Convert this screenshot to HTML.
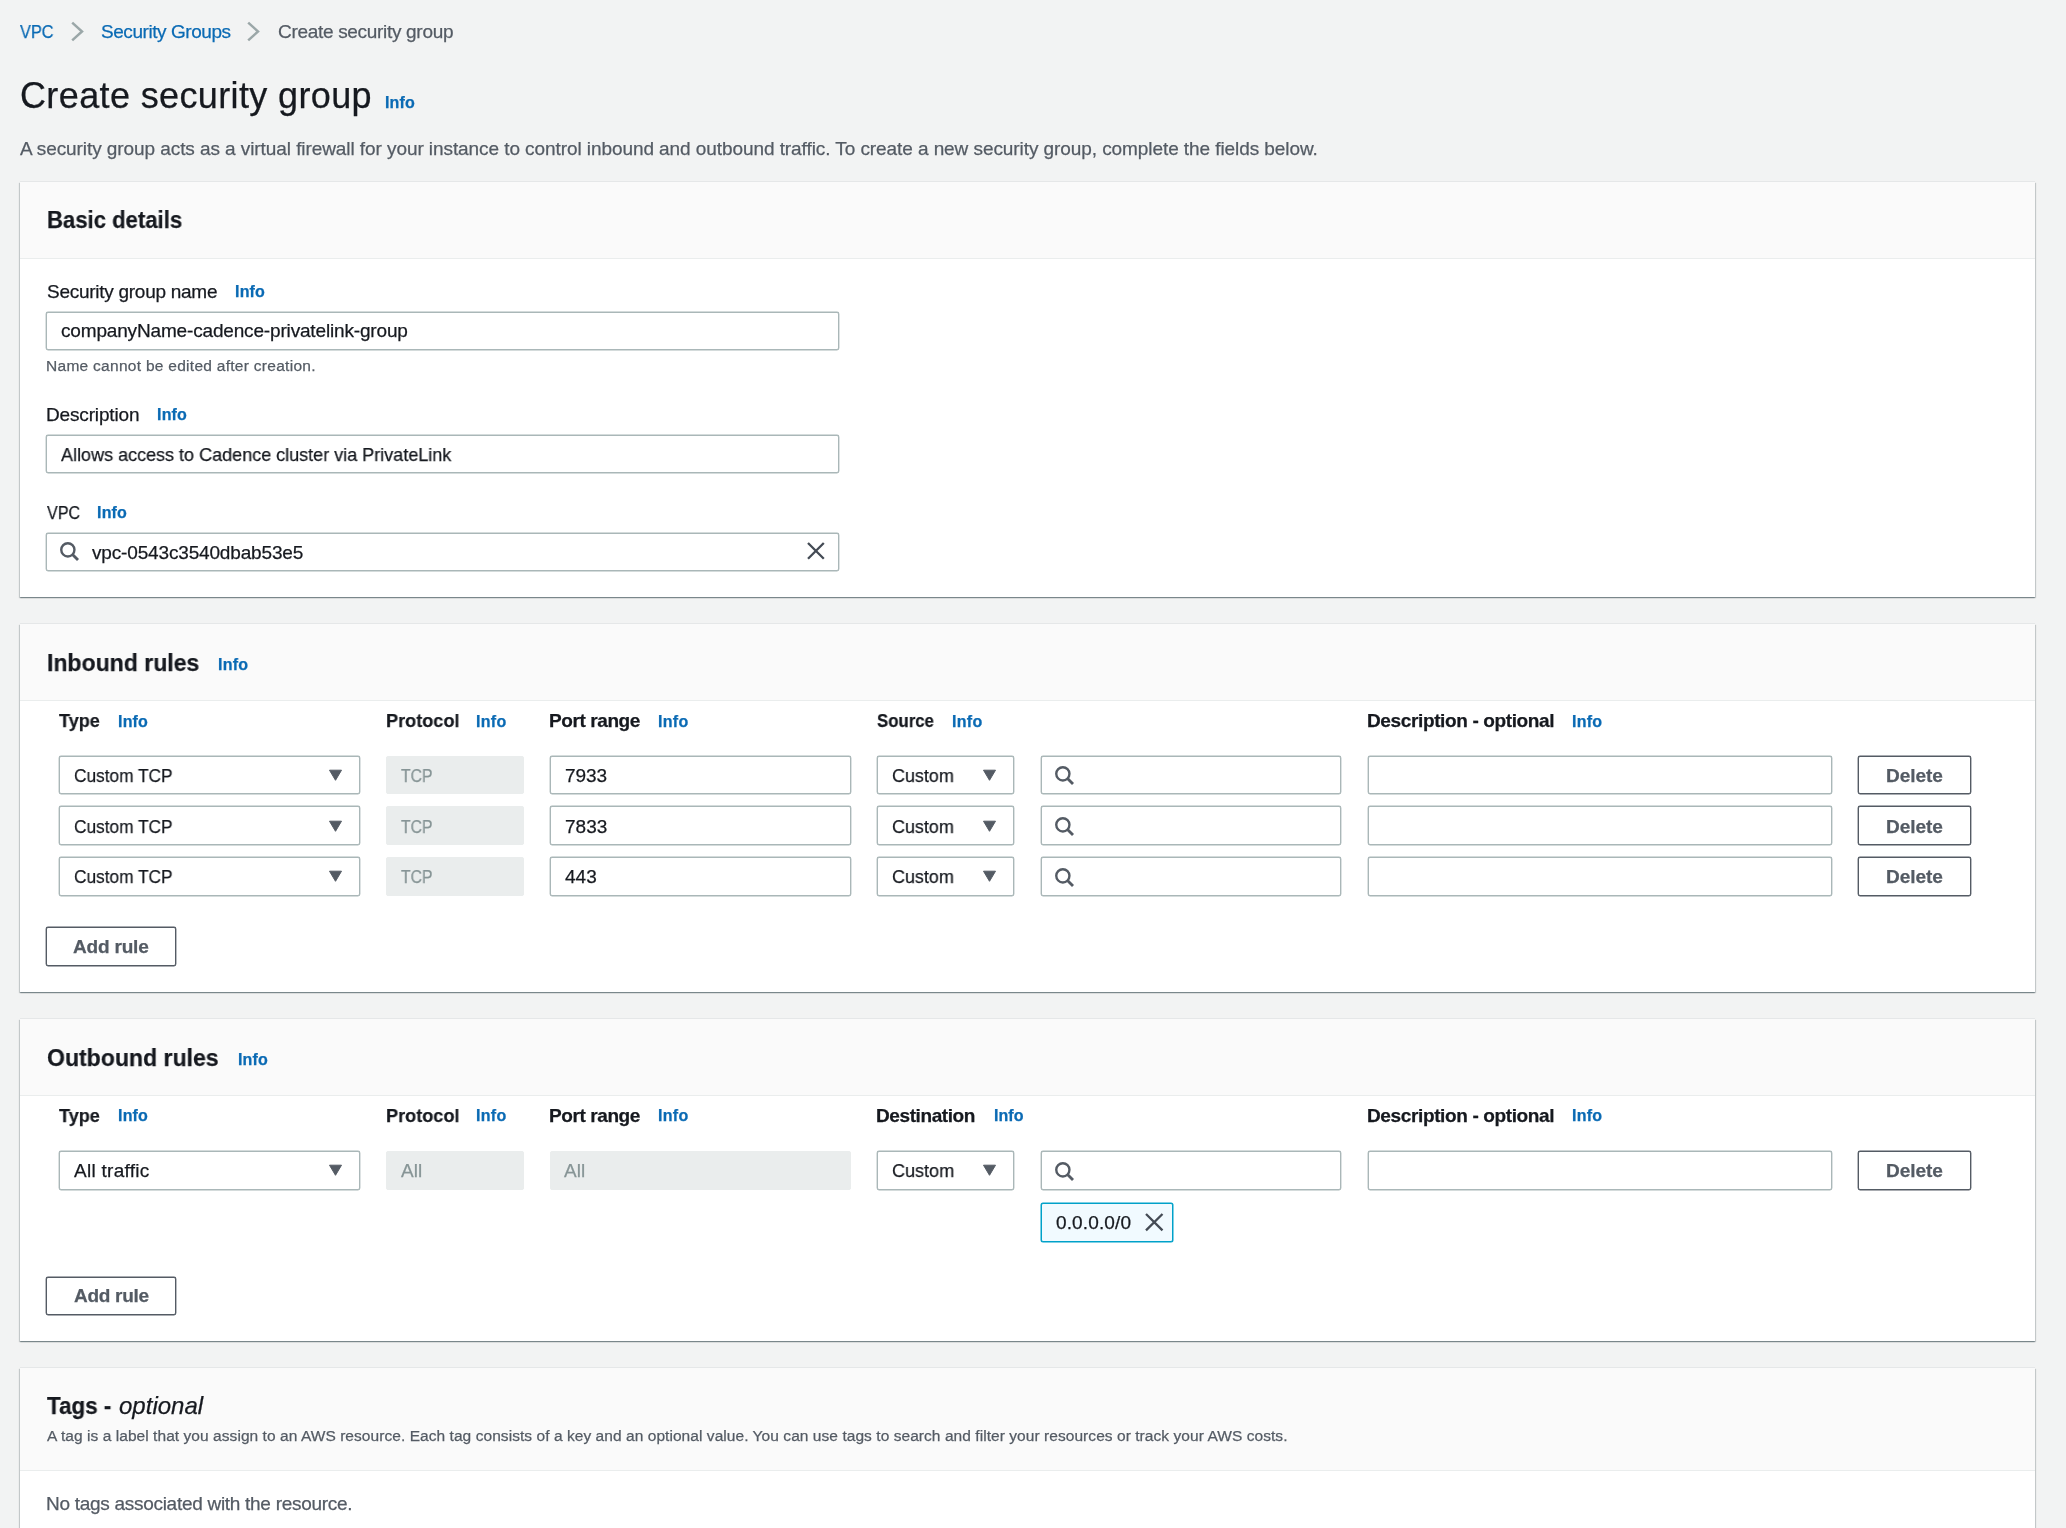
<!DOCTYPE html>
<html><head><meta charset="utf-8"><style>
html,body{margin:0;padding:0;}
body{width:2066px;height:1528px;overflow:hidden;position:relative;background:#f2f3f3;font-family:"Liberation Sans",sans-serif;color:#16191f;}
.t{position:absolute;white-space:pre;will-change:transform;-webkit-text-stroke:0.25px currentColor;}
.panel{position:absolute;left:20px;width:2015px;background:#fff;box-shadow:0 1px 1px 0 rgba(0,28,36,.3),1px 1px 1px 0 rgba(0,28,36,.15),-1px 1px 1px 0 rgba(0,28,36,.15),0 -1px 0 0 rgba(0,28,36,.05);}
.ph{background:#fafafa;border-bottom:1px solid #eaeded;box-sizing:border-box;}
.inp{position:absolute;box-sizing:border-box;border:1px solid #aab7b8;border-radius:2px;background:#fff;box-shadow:0 0 0 0.4px #aab7b8;}
.dis{position:absolute;box-sizing:border-box;border:1px solid #eaeded;border-radius:2px;background:#eaeded;}
.btn{position:absolute;box-sizing:border-box;border:1px solid #545b64;border-radius:2px;background:#fff;box-shadow:0 0 0 0.4px #545b64;}
.tok{position:absolute;box-sizing:border-box;border:1px solid #00a1c9;border-radius:2px;background:#f1faff;box-shadow:0 0 0 0.5px #00a1c9;}
.ic{position:absolute;overflow:visible;}
</style></head><body>
<div class="panel" style="top:182px;height:415px"><div class="ph" style="height:77px"></div></div>
<div class="panel" style="top:624px;height:368px"><div class="ph" style="height:77px"></div></div>
<div class="panel" style="top:1019px;height:322px"><div class="ph" style="height:77px"></div></div>
<div class="panel" style="top:1368px;height:232px"><div class="ph" style="height:102.5px"></div></div>
<div class="inp" style="left:46px;top:311.5px;width:793px;height:38.5px;"></div>
<div class="inp" style="left:46px;top:435px;width:793px;height:38px;"></div>
<div class="inp" style="left:46px;top:533px;width:793px;height:38px;"></div>
<div class="inp" style="left:59px;top:755.5px;width:301px;height:38.700000000000045px;"></div>
<div class="dis" style="left:386px;top:755.5px;width:138px;height:38.700000000000045px;"></div>
<div class="inp" style="left:550px;top:755.5px;width:301px;height:38.700000000000045px;"></div>
<div class="inp" style="left:877px;top:755.5px;width:137px;height:38.700000000000045px;"></div>
<div class="inp" style="left:1041px;top:755.5px;width:300px;height:38.700000000000045px;"></div>
<div class="inp" style="left:1368px;top:755.5px;width:464px;height:38.700000000000045px;"></div>
<div class="btn" style="left:1858px;top:755.5px;width:113px;height:38.700000000000045px;"></div>
<div class="inp" style="left:59px;top:806.2px;width:301px;height:38.700000000000045px;"></div>
<div class="dis" style="left:386px;top:806.2px;width:138px;height:38.700000000000045px;"></div>
<div class="inp" style="left:550px;top:806.2px;width:301px;height:38.700000000000045px;"></div>
<div class="inp" style="left:877px;top:806.2px;width:137px;height:38.700000000000045px;"></div>
<div class="inp" style="left:1041px;top:806.2px;width:300px;height:38.700000000000045px;"></div>
<div class="inp" style="left:1368px;top:806.2px;width:464px;height:38.700000000000045px;"></div>
<div class="btn" style="left:1858px;top:806.2px;width:113px;height:38.700000000000045px;"></div>
<div class="inp" style="left:59px;top:856.9px;width:301px;height:38.700000000000045px;"></div>
<div class="dis" style="left:386px;top:856.9px;width:138px;height:38.700000000000045px;"></div>
<div class="inp" style="left:550px;top:856.9px;width:301px;height:38.700000000000045px;"></div>
<div class="inp" style="left:877px;top:856.9px;width:137px;height:38.700000000000045px;"></div>
<div class="inp" style="left:1041px;top:856.9px;width:300px;height:38.700000000000045px;"></div>
<div class="inp" style="left:1368px;top:856.9px;width:464px;height:38.700000000000045px;"></div>
<div class="btn" style="left:1858px;top:856.9px;width:113px;height:38.700000000000045px;"></div>
<div class="btn" style="left:46px;top:927px;width:130px;height:39px;"></div>
<div class="inp" style="left:59px;top:1151px;width:301px;height:38.700000000000045px;"></div>
<div class="dis" style="left:386px;top:1151px;width:138px;height:38.700000000000045px;"></div>
<div class="dis" style="left:550px;top:1151px;width:301px;height:38.700000000000045px;"></div>
<div class="inp" style="left:877px;top:1151px;width:137px;height:38.700000000000045px;"></div>
<div class="inp" style="left:1041px;top:1151px;width:300px;height:38.700000000000045px;"></div>
<div class="inp" style="left:1368px;top:1151px;width:464px;height:38.700000000000045px;"></div>
<div class="btn" style="left:1858px;top:1151px;width:113px;height:38.700000000000045px;"></div>
<div class="tok" style="left:1040.5px;top:1202.7px;width:132.5px;height:39.09999999999991px;"></div>
<div class="btn" style="left:46px;top:1276.5px;width:130px;height:38.0px;"></div>
<svg class="ic" style="left:70px;top:20px" width="16" height="23" viewBox="0 0 16 23"><path d="M2.2 2.6 L12 11.5 L2.2 20.4" fill="none" stroke="#9ba7a8" stroke-width="2.5"/></svg>
<svg class="ic" style="left:246.3px;top:20px" width="16" height="23" viewBox="0 0 16 23"><path d="M2.2 2.6 L12 11.5 L2.2 20.4" fill="none" stroke="#9ba7a8" stroke-width="2.5"/></svg>
<svg class="ic" style="left:59.1px;top:541.1px" width="22" height="22" viewBox="0 0 22 22"><circle cx="8.85" cy="8.85" r="6.6" fill="none" stroke="#545b64" stroke-width="2.4"/><path d="M13.5 13.5 L19.0 19.0" stroke="#545b64" stroke-width="2.8"/></svg>
<svg class="ic" style="left:805.6px;top:540.8px" width="19.799999999999955" height="19.800000000000068" viewBox="0 0 19.799999999999955 19.800000000000068"><path d="M2 2 L17.799999999999955 17.800000000000068 M17.799999999999955 2 L2 17.800000000000068" stroke="#444b55" stroke-width="2.3"/></svg>
<svg class="ic" style="left:328.0px;top:768.9px" width="15" height="13" viewBox="0 0 15 13"><path d="M1.5 1.2 H13.5 L7.5 11.3 Z" fill="#545b64" stroke="#545b64" stroke-width="1" stroke-linejoin="round"/></svg>
<svg class="ic" style="left:982.3px;top:768.9px" width="15" height="13" viewBox="0 0 15 13"><path d="M1.5 1.2 H13.5 L7.5 11.3 Z" fill="#545b64" stroke="#545b64" stroke-width="1" stroke-linejoin="round"/></svg>
<svg class="ic" style="left:1053.7px;top:765.2px" width="22" height="22" viewBox="0 0 22 22"><circle cx="8.85" cy="8.85" r="6.6" fill="none" stroke="#545b64" stroke-width="2.4"/><path d="M13.5 13.5 L19.0 19.0" stroke="#545b64" stroke-width="2.8"/></svg>
<svg class="ic" style="left:328.0px;top:819.6px" width="15" height="13" viewBox="0 0 15 13"><path d="M1.5 1.2 H13.5 L7.5 11.3 Z" fill="#545b64" stroke="#545b64" stroke-width="1" stroke-linejoin="round"/></svg>
<svg class="ic" style="left:982.3px;top:819.6px" width="15" height="13" viewBox="0 0 15 13"><path d="M1.5 1.2 H13.5 L7.5 11.3 Z" fill="#545b64" stroke="#545b64" stroke-width="1" stroke-linejoin="round"/></svg>
<svg class="ic" style="left:1053.7px;top:815.9000000000001px" width="22" height="22" viewBox="0 0 22 22"><circle cx="8.85" cy="8.85" r="6.6" fill="none" stroke="#545b64" stroke-width="2.4"/><path d="M13.5 13.5 L19.0 19.0" stroke="#545b64" stroke-width="2.8"/></svg>
<svg class="ic" style="left:328.0px;top:870.3px" width="15" height="13" viewBox="0 0 15 13"><path d="M1.5 1.2 H13.5 L7.5 11.3 Z" fill="#545b64" stroke="#545b64" stroke-width="1" stroke-linejoin="round"/></svg>
<svg class="ic" style="left:982.3px;top:870.3px" width="15" height="13" viewBox="0 0 15 13"><path d="M1.5 1.2 H13.5 L7.5 11.3 Z" fill="#545b64" stroke="#545b64" stroke-width="1" stroke-linejoin="round"/></svg>
<svg class="ic" style="left:1053.7px;top:866.6px" width="22" height="22" viewBox="0 0 22 22"><circle cx="8.85" cy="8.85" r="6.6" fill="none" stroke="#545b64" stroke-width="2.4"/><path d="M13.5 13.5 L19.0 19.0" stroke="#545b64" stroke-width="2.8"/></svg>
<svg class="ic" style="left:328.0px;top:1164.4px" width="15" height="13" viewBox="0 0 15 13"><path d="M1.5 1.2 H13.5 L7.5 11.3 Z" fill="#545b64" stroke="#545b64" stroke-width="1" stroke-linejoin="round"/></svg>
<svg class="ic" style="left:982.3px;top:1164.4px" width="15" height="13" viewBox="0 0 15 13"><path d="M1.5 1.2 H13.5 L7.5 11.3 Z" fill="#545b64" stroke="#545b64" stroke-width="1" stroke-linejoin="round"/></svg>
<svg class="ic" style="left:1053.7px;top:1160.7px" width="22" height="22" viewBox="0 0 22 22"><circle cx="8.85" cy="8.85" r="6.6" fill="none" stroke="#545b64" stroke-width="2.4"/><path d="M13.5 13.5 L19.0 19.0" stroke="#545b64" stroke-width="2.8"/></svg>
<svg class="ic" style="left:1143.5px;top:1212.4px" width="20.5" height="20.399999999999864" viewBox="0 0 20.5 20.399999999999864"><path d="M2 2 L18.5 18.399999999999864 M18.5 2 L2 18.399999999999864" stroke="#444b55" stroke-width="2.3"/></svg>
<div class="t" style="left:20.30px;top:21.92px;font-size:19px;line-height:19px;color:#0a6ab4;transform:scaleX(0.8580);transform-origin:0 0;">VPC</div>
<div class="t" style="left:101.00px;top:21.92px;font-size:19px;line-height:19px;color:#0a6ab4;letter-spacing:-0.444px;">Security Groups</div>
<div class="t" style="left:278.40px;top:21.92px;font-size:19px;line-height:19px;color:#545b64;letter-spacing:-0.309px;">Create security group</div>
<div class="t" style="left:20.20px;top:78.13px;font-size:36px;line-height:36px;letter-spacing:0.373px;">Create security group</div>
<div class="t" style="left:385.00px;top:95.06px;font-size:16px;line-height:16px;font-weight:bold;color:#0a6ab4;letter-spacing:0.151px;">Info</div>
<div class="t" style="left:20.20px;top:138.92px;font-size:19px;line-height:19px;color:#545b64;letter-spacing:-0.076px;">A security group acts as a virtual firewall for your instance to control inbound and outbound traffic. To create a new security group, complete the fields below.</div>
<div class="t" style="left:46.68px;top:208.08px;font-size:24px;line-height:24px;font-weight:bold;transform:scaleX(0.9209);transform-origin:0 0;">Basic details</div>
<div class="t" style="left:46.70px;top:281.82px;font-size:19px;line-height:19px;letter-spacing:-0.269px;">Security group name</div>
<div class="t" style="left:234.90px;top:284.36px;font-size:16px;line-height:16px;font-weight:bold;color:#0a6ab4;letter-spacing:0.184px;">Info</div>
<div class="t" style="left:61.00px;top:321.42px;font-size:19px;line-height:19px;letter-spacing:-0.163px;">companyName-cadence-privatelink-group</div>
<div class="t" style="left:45.70px;top:358.48px;font-size:15.5px;line-height:15.5px;color:#545b64;letter-spacing:0.282px;">Name cannot be edited after creation.</div>
<div class="t" style="left:45.80px;top:404.92px;font-size:19px;line-height:19px;letter-spacing:-0.157px;">Description</div>
<div class="t" style="left:156.90px;top:407.46px;font-size:16px;line-height:16px;font-weight:bold;color:#0a6ab4;letter-spacing:0.184px;">Info</div>
<div class="t" style="left:61.00px;top:444.62px;font-size:19px;line-height:19px;transform:scaleX(0.9477);transform-origin:0 0;">Allows access to Cadence cluster via PrivateLink</div>
<div class="t" style="left:46.80px;top:502.92px;font-size:19px;line-height:19px;transform:scaleX(0.8476);transform-origin:0 0;">VPC</div>
<div class="t" style="left:97.30px;top:505.46px;font-size:16px;line-height:16px;font-weight:bold;color:#0a6ab4;letter-spacing:0.184px;">Info</div>
<div class="t" style="left:92.20px;top:542.52px;font-size:19px;line-height:19px;letter-spacing:-0.160px;">vpc-0543c3540dbab53e5</div>
<div class="t" style="left:46.54px;top:650.58px;font-size:24px;line-height:24px;font-weight:bold;transform:scaleX(0.9599);transform-origin:0 0;">Inbound rules</div>
<div class="t" style="left:217.70px;top:656.76px;font-size:16px;line-height:16px;font-weight:bold;color:#0a6ab4;letter-spacing:0.218px;">Info</div>
<div class="t" style="left:59.30px;top:711.12px;font-size:19px;line-height:19px;font-weight:bold;transform:scaleX(0.9512);transform-origin:0 0;">Type</div>
<div class="t" style="left:117.90px;top:713.66px;font-size:16px;line-height:16px;font-weight:bold;color:#0a6ab4;letter-spacing:0.184px;">Info</div>
<div class="t" style="left:386.05px;top:711.12px;font-size:19px;line-height:19px;font-weight:bold;transform:scaleX(0.9535);transform-origin:0 0;">Protocol</div>
<div class="t" style="left:475.90px;top:713.66px;font-size:16px;line-height:16px;font-weight:bold;color:#0a6ab4;letter-spacing:0.284px;">Info</div>
<div class="t" style="left:549.30px;top:711.12px;font-size:19px;line-height:19px;font-weight:bold;letter-spacing:-0.406px;">Port range</div>
<div class="t" style="left:657.70px;top:713.66px;font-size:16px;line-height:16px;font-weight:bold;color:#0a6ab4;letter-spacing:0.318px;">Info</div>
<div class="t" style="left:877.40px;top:711.12px;font-size:19px;line-height:19px;font-weight:bold;transform:scaleX(0.8834);transform-origin:0 0;">Source</div>
<div class="t" style="left:952.00px;top:713.66px;font-size:16px;line-height:16px;font-weight:bold;color:#0a6ab4;letter-spacing:0.318px;">Info</div>
<div class="t" style="left:1367.40px;top:711.12px;font-size:19px;line-height:19px;font-weight:bold;letter-spacing:-0.367px;">Description - optional</div>
<div class="t" style="left:1571.80px;top:713.66px;font-size:16px;line-height:16px;font-weight:bold;color:#0a6ab4;letter-spacing:0.251px;">Info</div>
<div class="t" style="left:74.30px;top:765.92px;font-size:19px;line-height:19px;transform:scaleX(0.9087);transform-origin:0 0;">Custom TCP</div>
<div class="t" style="left:401.00px;top:765.92px;font-size:19px;line-height:19px;color:#879596;transform:scaleX(0.8305);transform-origin:0 0;">TCP</div>
<div class="t" style="left:564.50px;top:765.92px;font-size:19px;line-height:19px;letter-spacing:-0.067px;">7933</div>
<div class="t" style="left:892.00px;top:765.92px;font-size:19px;line-height:19px;transform:scaleX(0.9438);transform-origin:0 0;">Custom</div>
<div class="t" style="left:1886.00px;top:765.92px;font-size:19px;line-height:19px;font-weight:bold;color:#545b64;letter-spacing:-0.052px;">Delete</div>
<div class="t" style="left:74.30px;top:816.62px;font-size:19px;line-height:19px;transform:scaleX(0.9087);transform-origin:0 0;">Custom TCP</div>
<div class="t" style="left:401.00px;top:816.62px;font-size:19px;line-height:19px;color:#879596;transform:scaleX(0.8305);transform-origin:0 0;">TCP</div>
<div class="t" style="left:564.50px;top:816.62px;font-size:19px;line-height:19px;">7833</div>
<div class="t" style="left:892.00px;top:816.62px;font-size:19px;line-height:19px;transform:scaleX(0.9438);transform-origin:0 0;">Custom</div>
<div class="t" style="left:1886.00px;top:816.62px;font-size:19px;line-height:19px;font-weight:bold;color:#545b64;letter-spacing:-0.052px;">Delete</div>
<div class="t" style="left:74.30px;top:867.32px;font-size:19px;line-height:19px;transform:scaleX(0.9087);transform-origin:0 0;">Custom TCP</div>
<div class="t" style="left:401.00px;top:867.32px;font-size:19px;line-height:19px;color:#879596;transform:scaleX(0.8305);transform-origin:0 0;">TCP</div>
<div class="t" style="left:564.50px;top:867.32px;font-size:19px;line-height:19px;">443</div>
<div class="t" style="left:892.00px;top:867.32px;font-size:19px;line-height:19px;transform:scaleX(0.9438);transform-origin:0 0;">Custom</div>
<div class="t" style="left:1886.00px;top:867.32px;font-size:19px;line-height:19px;font-weight:bold;color:#545b64;letter-spacing:-0.052px;">Delete</div>
<div class="t" style="left:73.20px;top:936.72px;font-size:19px;line-height:19px;font-weight:bold;color:#545b64;letter-spacing:-0.184px;">Add rule</div>
<div class="t" style="left:47.20px;top:1046.18px;font-size:24px;line-height:24px;font-weight:bold;transform:scaleX(0.9607);transform-origin:0 0;">Outbound rules</div>
<div class="t" style="left:237.90px;top:1052.36px;font-size:16px;line-height:16px;font-weight:bold;color:#0a6ab4;letter-spacing:0.151px;">Info</div>
<div class="t" style="left:59.30px;top:1105.92px;font-size:19px;line-height:19px;font-weight:bold;transform:scaleX(0.9512);transform-origin:0 0;">Type</div>
<div class="t" style="left:117.90px;top:1108.46px;font-size:16px;line-height:16px;font-weight:bold;color:#0a6ab4;letter-spacing:0.184px;">Info</div>
<div class="t" style="left:386.05px;top:1105.92px;font-size:19px;line-height:19px;font-weight:bold;transform:scaleX(0.9535);transform-origin:0 0;">Protocol</div>
<div class="t" style="left:475.90px;top:1108.46px;font-size:16px;line-height:16px;font-weight:bold;color:#0a6ab4;letter-spacing:0.284px;">Info</div>
<div class="t" style="left:549.30px;top:1105.92px;font-size:19px;line-height:19px;font-weight:bold;letter-spacing:-0.406px;">Port range</div>
<div class="t" style="left:657.70px;top:1108.46px;font-size:16px;line-height:16px;font-weight:bold;color:#0a6ab4;letter-spacing:0.318px;">Info</div>
<div class="t" style="left:876.40px;top:1105.92px;font-size:19px;line-height:19px;font-weight:bold;letter-spacing:-0.405px;">Destination</div>
<div class="t" style="left:993.60px;top:1108.46px;font-size:16px;line-height:16px;font-weight:bold;color:#0a6ab4;letter-spacing:0.051px;">Info</div>
<div class="t" style="left:1367.40px;top:1105.92px;font-size:19px;line-height:19px;font-weight:bold;letter-spacing:-0.367px;">Description - optional</div>
<div class="t" style="left:1571.80px;top:1108.46px;font-size:16px;line-height:16px;font-weight:bold;color:#0a6ab4;letter-spacing:0.251px;">Info</div>
<div class="t" style="left:74.00px;top:1161.42px;font-size:19px;line-height:19px;letter-spacing:0.280px;">All traffic</div>
<div class="t" style="left:401.00px;top:1161.42px;font-size:19px;line-height:19px;color:#879596;">All</div>
<div class="t" style="left:563.70px;top:1161.42px;font-size:19px;line-height:19px;color:#879596;">All</div>
<div class="t" style="left:892.00px;top:1161.42px;font-size:19px;line-height:19px;transform:scaleX(0.9484);transform-origin:0 0;">Custom</div>
<div class="t" style="left:1886.00px;top:1161.42px;font-size:19px;line-height:19px;font-weight:bold;color:#545b64;letter-spacing:-0.052px;">Delete</div>
<div class="t" style="left:1055.50px;top:1213.12px;font-size:19px;line-height:19px;letter-spacing:0.127px;">0.0.0.0/0</div>
<div class="t" style="left:73.60px;top:1285.92px;font-size:19px;line-height:19px;font-weight:bold;color:#545b64;letter-spacing:-0.284px;">Add rule</div>
<div class="t" style="left:46.50px;top:1393.58px;font-size:24px;line-height:24px;font-weight:bold;transform:scaleX(0.9318);transform-origin:0 0;">Tags -</div>
<div class="t" style="left:118.50px;top:1393.58px;font-size:24px;line-height:24px;font-style:italic;letter-spacing:0.009px;">optional</div>
<div class="t" style="left:46.50px;top:1427.88px;font-size:15.5px;line-height:15.5px;color:#545b64;letter-spacing:0.058px;">A tag is a label that you assign to an AWS resource. Each tag consists of a key and an optional value. You can use tags to search and filter your resources or track your AWS costs.</div>
<div class="t" style="left:45.50px;top:1493.72px;font-size:19px;line-height:19px;color:#545b64;letter-spacing:-0.285px;">No tags associated with the resource.</div>
</body></html>
